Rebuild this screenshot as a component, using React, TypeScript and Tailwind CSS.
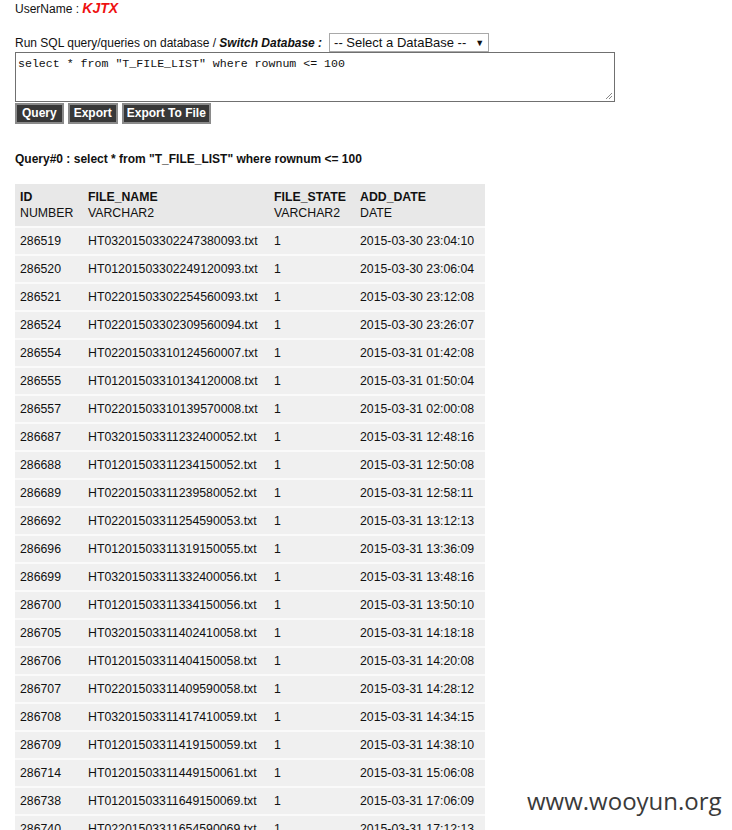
import React from 'react'

const rows: [string, string, string][] = [
  ['286519', 'HT03201503302247380093.txt', '2015-03-30 23:04:10'],
  ['286520', 'HT01201503302249120093.txt', '2015-03-30 23:06:04'],
  ['286521', 'HT02201503302254560093.txt', '2015-03-30 23:12:08'],
  ['286524', 'HT02201503302309560094.txt', '2015-03-30 23:26:07'],
  ['286554', 'HT02201503310124560007.txt', '2015-03-31 01:42:08'],
  ['286555', 'HT01201503310134120008.txt', '2015-03-31 01:50:04'],
  ['286557', 'HT02201503310139570008.txt', '2015-03-31 02:00:08'],
  ['286687', 'HT03201503311232400052.txt', '2015-03-31 12:48:16'],
  ['286688', 'HT01201503311234150052.txt', '2015-03-31 12:50:08'],
  ['286689', 'HT02201503311239580052.txt', '2015-03-31 12:58:11'],
  ['286692', 'HT02201503311254590053.txt', '2015-03-31 13:12:13'],
  ['286696', 'HT01201503311319150055.txt', '2015-03-31 13:36:09'],
  ['286699', 'HT03201503311332400056.txt', '2015-03-31 13:48:16'],
  ['286700', 'HT01201503311334150056.txt', '2015-03-31 13:50:10'],
  ['286705', 'HT03201503311402410058.txt', '2015-03-31 14:18:18'],
  ['286706', 'HT01201503311404150058.txt', '2015-03-31 14:20:08'],
  ['286707', 'HT02201503311409590058.txt', '2015-03-31 14:28:12'],
  ['286708', 'HT03201503311417410059.txt', '2015-03-31 14:34:15'],
  ['286709', 'HT01201503311419150059.txt', '2015-03-31 14:38:10'],
  ['286714', 'HT01201503311449150061.txt', '2015-03-31 15:06:08'],
  ['286738', 'HT01201503311649150069.txt', '2015-03-31 17:06:09'],
  ['286740', 'HT02201503311654590069.txt', '2015-03-31 17:12:13'],
]

const query = 'select * from "T_FILE_LIST" where rownum <= 100'

function Btn({ label, px }: { label: string; px: string }) {
  return (
    <button className={`h-[21px] border-2 border-[#8a8a8a] bg-[#383838] ${px} text-[12px] font-bold leading-[17px] text-white`}>
      {label}
    </button>
  )
}

export default function App() {
  return (
    <div className="relative h-[830px] overflow-hidden bg-white pl-[15px] font-['Liberation_Sans',Arial,sans-serif] text-[12.3px] leading-[16px] text-[#111]">
      <div className="h-[16px] text-[12px]">
        UserName : <span className="text-[14px] font-bold italic text-[#ee1111]">KJTX</span>
      </div>

      <div className="mt-[17px] flex h-[19px] items-center text-[12px]">
        <span>
          Run SQL query/queries on database / <b className="italic">Switch Database :</b>
        </span>
        <div className="ml-[7px] flex h-[19px] w-[160px] items-center justify-between border border-[#a9a9a9] bg-white px-[4px] text-[13px]">
          <span>-- Select a DataBase --</span>
          <span className="text-[9px]">▼</span>
        </div>
      </div>

      <div className="relative h-[50px] w-[600px] border border-[#707070] px-[2px] pt-[3px] font-['Liberation_Mono','Courier_New',monospace] text-[11.6px] leading-[15px]">
        {query}
        <svg className="absolute bottom-[1px] right-[1px]" width="8" height="8" viewBox="0 0 8 8">
          <path d="M7 1 L1 7 M7 4 L4 7" stroke="#888" strokeWidth="1" />
        </svg>
      </div>

      <div className="mt-[1px] flex gap-[4px]">
        <Btn label="Query" px="px-[5px]" />
        <Btn label="Export" px="px-[4px]" />
        <Btn label="Export To File" px="px-[3px]" />
      </div>

      <div className="mt-[27px] text-[12px] font-bold">Query#0 : {query}</div>

      <table className="mt-[17px] w-[470px] table-fixed border-collapse">
        <colgroup>
          <col className="w-[68px]" />
          <col className="w-[186px]" />
          <col className="w-[86px]" />
          <col className="w-[130px]" />
        </colgroup>
        <thead>
          <tr className="h-[43px] border-b-2 border-[#fafafa] bg-[#e8e8e8] text-left align-middle">
            {[
              ['ID', 'NUMBER'],
              ['FILE_NAME', 'VARCHAR2'],
              ['FILE_STATE', 'VARCHAR2'],
              ['ADD_DATE', 'DATE'],
            ].map(([n, t]) => (
              <th key={n} className="px-[5px] font-normal">
                <div className="font-bold">{n}</div>
                <div>{t}</div>
              </th>
            ))}
          </tr>
        </thead>
        <tbody>
          {rows.map(([id, file, date]) => (
            <tr key={id} className="h-[28px] border-b-2 border-[#fafafa] bg-[#f0f0f0]">
              <td className="px-[5px]">{id}</td>
              <td className="px-[5px]">{file}</td>
              <td className="px-[5px]">1</td>
              <td className="px-[5px]">{date}</td>
            </tr>
          ))}
        </tbody>
      </table>

      <div className="absolute left-[527px] top-[786px] font-['Open_Sans',sans-serif] text-[24px] leading-[30px] text-[#3a3a3a]">
        www.wooyun.org
      </div>
    </div>
  )
}
